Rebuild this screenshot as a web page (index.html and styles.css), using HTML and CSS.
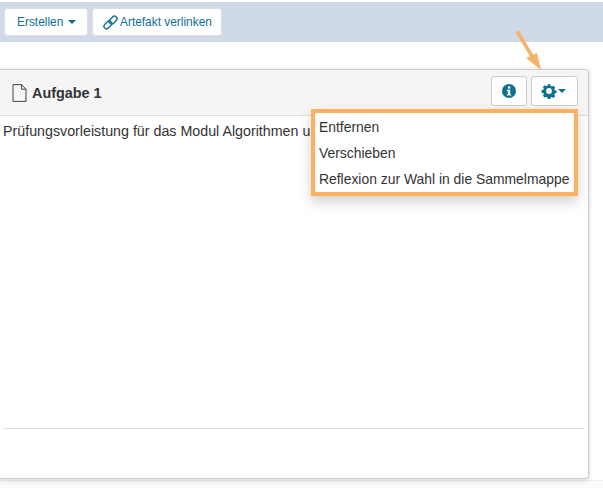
FILE: index.html
```html
<!DOCTYPE html>
<html lang="de">
<head>
<meta charset="utf-8">
<title>Aufgabe 1</title>
<link rel="stylesheet" href="styles.css">
</head>
<body>
<div class="toolbar">
  <button class="btn">Erstellen <span class="caret"></span></button>
  <button class="btn btn-link">
    <svg class="link-icon" viewBox="0 0 16 16" width="15" height="15"><g fill="none" stroke="#0f6f91" stroke-width="1.5"><rect x="8" y="0.700" width="5.500" height="9.500" rx="2.700" transform="rotate(45 10.750 5.450)"/><rect x="2.500" y="5.800" width="5.500" height="9.500" rx="2.700" transform="rotate(45 5.250 10.550)"/></g></svg>
    Artefakt verlinken
  </button>
</div>
<main class="panel">
  <header class="panel-head">
    <h1 class="title">
      <svg class="doc-icon" viewBox="0 0 15 18" width="15" height="18"><path d="M1 .6h8.500L14 5.200v12.200H1z M9.500 .6v4.600H14" fill="none" stroke="#444" stroke-width="1"/></svg>
      Aufgabe 1
    </h1>
    <div class="actions">
      <button class="icon-btn info">
        <svg viewBox="0 0 14 14" width="14" height="14"><circle cx="7" cy="7" r="7" fill="#0f6f91"/><rect x="5.900" y="2.400" width="2.400" height="2.200" fill="#fff"/><path d="M4.900 5.700h3.300v4.500h1v1.200H4.900v-1.200h1V6.900h-1z" fill="#fff"/></svg>
      </button>
      <button class="icon-btn gear">
        <svg viewBox="0 0 16 16" width="16" height="16"><path d="M6.500 .5h3l.4 2 1.400.6 1.700-1.100 2.100 2.100-1.100 1.700.6 1.400 2 .4v3l-2 .4-.6 1.400 1.100 1.700-2.100 2.100-1.700-1.100-1.400.6-.4 2h-3l-.4-2-1.400-.6L3 15.700.9 13.600 2 11.900l-.6-1.400-2-.4v-3l2-.4L2 5.300.9 3.600 3 1.500l1.700 1.100 1.400-.6z" fill="#0f6f91" transform="translate(1.100 .9) scale(.87)"/><circle cx="8" cy="8" r="2.900" fill="#fff"/></svg>
        <span class="caret"></span>
      </button>
    </div>
  </header>
  <p class="body-text">Prüfungsvorleistung für das Modul Algorithmen u</p>
  <div class="panel-foot"></div>
  <ul class="menu">
    <li>Entfernen</li>
    <li>Verschieben</li>
    <li>Reflexion zur Wahl in die Sammelmappe</li>
  </ul>
</main>
<div class="page-strip"></div>
<svg class="arrow" viewBox="0 0 40 50" width="40" height="50"><path d="M6 4 L22 31" stroke="#f8b26a" stroke-width="3.500" fill="none"/><path d="M15 31 L26 26 L30 43 Z" fill="#f8b26a"/></svg>
</body>
</html>
```
FILE: styles.css
```css
* { box-sizing: border-box; }
html, body { margin: 0; padding: 0; height: 100%; }
body {
  position: relative;
  overflow: hidden;
  background: #fff;
  font-family: "Liberation Sans", Arial, sans-serif;
  font-size: 14px;
  color: #333;
}
.toolbar {
  height: 40px;
  margin-top: 2px;
  padding: 6px 4px;
  display: flex;
  gap: 5px;
  background: #cfd9e8;
}
.btn {
  height: 28px;
  padding: 0;
  border: 1px solid #ddd;
  border-radius: 3px;
  background: #fff;
  color: #0f6f91;
  font: 11.9px "Liberation Sans", Arial, sans-serif;
  display: flex;
  align-items: center;
  gap: 4px;
}
.btn:first-child { width: 84px; padding-left: 12px; }
.btn-link { width: 130px; padding-left: 10px; gap: 2px; margin-left: -1px; }
.caret {
  display: inline-block;
  width: 0;
  height: 0;
  border-left: 4px solid transparent;
  border-right: 4px solid transparent;
  border-top: 4px solid #0f6f91;
  margin-left: 1px;
}
.panel {
  position: relative;
  width: 589px;
  height: 410px;
  margin-top: 27px;
  background: #fff;
  border: 1px solid #ccc;
  border-left: 0;
  border-radius: 0 4px 4px 0;
  box-shadow: 0 1px 5px rgba(0, 0, 0, .18);
  display: flex;
  flex-direction: column;
}
.panel-head {
  height: 46px;
  padding: 0 10px 3px 12px;
  background: #f5f5f5;
  border-bottom: 1px solid #ddd;
  display: flex;
  align-items: center;
  justify-content: space-between;
}
.title {
  margin: 3px 0 0;
  font-size: 14.4px;
  font-weight: 700;
  color: #333;
  display: flex;
  align-items: center;
  gap: 5px;
}
.actions { display: flex; gap: 4px; }
.icon-btn {
  height: 30px;
  border: 1px solid #ccc;
  border-radius: 3px;
  background: #fff;
  padding: 0;
  display: flex;
  align-items: center;
  justify-content: center;
  gap: 0;
}
.info { width: 36px; }
.gear { width: 47px; padding-right: 2px; }
.body-text {
  margin: 0;
  padding: 7px 0 0 3px;
  font-size: 14.25px;
  line-height: 16px;
  white-space: nowrap;
  flex: 1;
}
.panel-foot {
  height: 50px;
  margin: 0 4px 0 3px;
  border-top: 1px solid #ddd;
}
.menu {
  position: absolute;
  left: 311px;
  top: 39px;
  width: 267px;
  height: 87px;
  margin: 0;
  padding: 1px 0 0;
  list-style: none;
  background: #fff;
  border: 4px solid #fdb062;
  box-shadow: 0 6px 12px rgba(0, 0, 0, .18);
}
.menu li {
  height: 26px;
  line-height: 26px;
  padding-left: 4px;
  color: #333;
  font-size: 13.9px;
  white-space: nowrap;
}
.page-strip {
  height: 10px;
  margin-top: 1px;
  background: #f9fafa;
  border-top: 1px solid #eee;
}
.arrow {
  position: absolute;
  left: 511px;
  top: 27px;
}
```
